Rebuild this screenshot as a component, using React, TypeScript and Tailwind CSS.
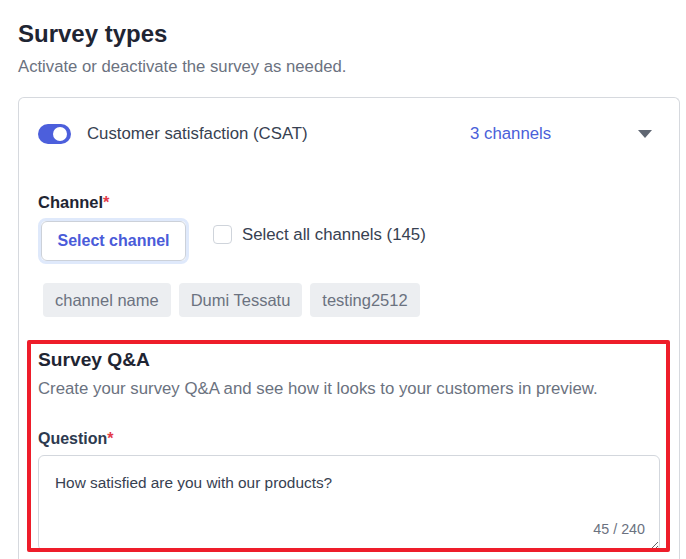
import React from "react";

const chips = ["channel name", "Dumi Tessatu", "testing2512"];

function Toggle() {
  return (
    <span className="flex h-[20px] w-[33px] items-center justify-end rounded-full bg-[#4c5fdc] pr-[4px]">
      <span className="h-[14px] w-[14px] rounded-full bg-white" />
    </span>
  );
}

export default function App() {
  return (
    <div className="min-h-[559px] bg-white pl-[18px] pr-[6px] font-['Liberation_Sans',Arial,sans-serif]">
      <h1 className="pt-[19px] text-[24px] leading-[30px] font-bold text-[#1f2533]">Survey types</h1>
      <p className="mt-[8px] text-[16.7px] leading-[20px] text-[#6b7280]">
        Activate or deactivate the survey as needed.
      </p>

      <div className="mt-[20px] rounded-t-[6px] border border-b-0 border-[#d6d9de] px-[19px] pb-[20px]">
        {/* header row */}
        <div className="flex h-[71px] items-center">
          <Toggle />
          <span className="ml-[16px] w-[383px] text-[16.8px] text-[#374151]">Customer satisfaction (CSAT)</span>
          <span className="text-[16.8px] text-[#4a5fd9]">3 channels</span>
          <svg viewBox="0 0 14 8" className="mr-[8px] ml-auto h-[8px] w-[14px]">
            <path d="M0 0h14L7 8z" fill="#5f6672" />
          </svg>
        </div>

        <div className="mt-[24px] text-[16.5px] leading-[18px] font-bold text-[#1f2533]">
          Channel<span className="text-[#e33b4a]">*</span>
        </div>

        <div className="mt-[7px] flex items-start">
          <button className="h-[46px] w-[151px] rounded-[8px] border-[3px] border-[#dfe9fb] p-0">
            <span className="flex h-full w-full items-center justify-center rounded-[6px] border border-[#ccd1d9] bg-white text-[16px] font-bold text-[#4a5bd9]">
              Select channel
            </span>
          </button>
          <label className="mt-[4px] ml-[24px] flex items-center">
            <span className="h-[19px] w-[19px] rounded-[4px] border border-[#cfd4db] bg-white" />
            <span className="ml-[10px] text-[16.8px] text-[#374151]">Select all channels (145)</span>
          </label>
        </div>

        <div className="mt-[19px] ml-[5px] flex gap-[8px]">
          {chips.map((c) => (
            <span
              key={c}
              className="flex h-[34px] items-center rounded-[4px] bg-[#eceef1] px-[12px] text-[16.5px] text-[#6b7280]"
            >
              {c}
            </span>
          ))}
        </div>

        {/* Survey Q&A */}
        <div className="mt-[23px] -mr-[10px] -ml-[11px] h-[212px] overflow-hidden rounded-[2px] border-4 border-[#ee1d2a] pt-[4px] pr-[6px] pl-[7px]">
          <h2 className="text-[19.2px] leading-[24px] font-bold text-[#1f2533]">Survey Q&amp;A</h2>
          <p className="mt-[7px] text-[16.8px] leading-[20px] text-[#6b7280]">
            Create your survey Q&amp;A and see how it looks to your customers in preview.
          </p>
          <div className="mt-[31px] text-[16px] leading-[18px] font-bold text-[#2d3a4f]">
            Question<span className="text-[#e33b4a]">*</span>
          </div>
          <div className="relative mt-[7px]">
            <textarea
              readOnly
              defaultValue="How satisfied are you with our products?"
              className="block h-[96px] w-full resize rounded-[6px] border border-[#d3d7dd] bg-white px-[16px] pt-[17px] font-['Liberation_Sans',Arial,sans-serif] text-[15.4px] leading-[20px] text-[#374151] outline-none"
            />
            <span className="absolute top-[64px] right-[15px] text-[14.3px] text-[#6b7280]">45 / 240</span>
          </div>
        </div>
      </div>
    </div>
  );
}
